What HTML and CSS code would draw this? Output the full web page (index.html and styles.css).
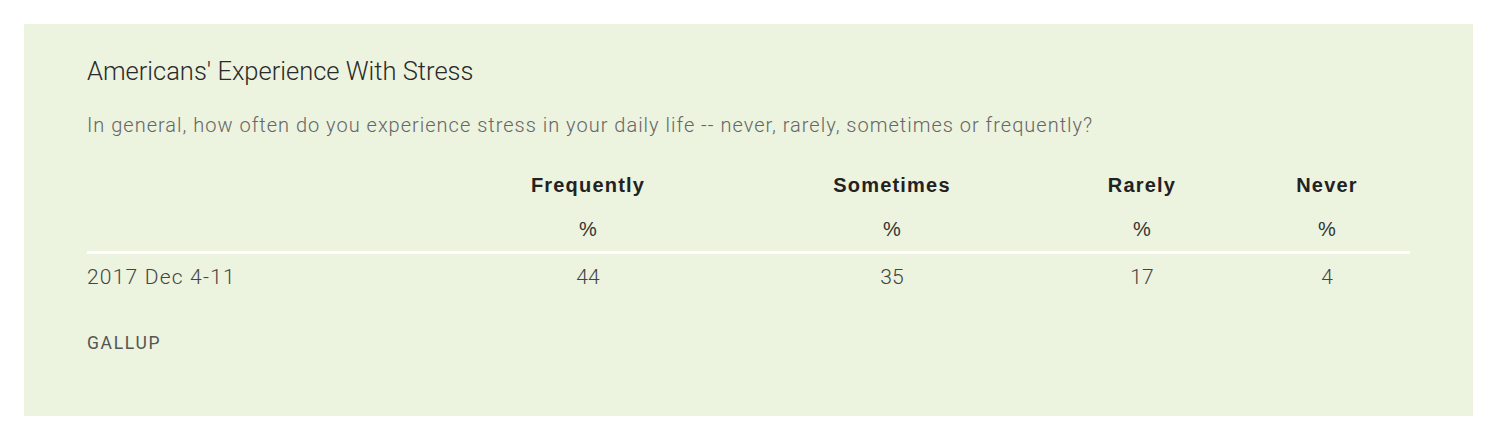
FILE: index.html
```html
<!DOCTYPE html>
<html>
<head>
<meta charset="utf-8">
<link rel="stylesheet" href="styles.css">
</head>
<body>
<div class="card">
  <h2 class="title">Americans' Experience With Stress</h2>
  <p class="question">In general, how often do you experience stress in your daily life -- never, rarely, sometimes or frequently?</p>
  <div class="table">
    <div class="row head">
      <div class="cell label"></div>
      <div class="cell">Frequently</div>
      <div class="cell">Sometimes</div>
      <div class="cell">Rarely</div>
      <div class="cell">Never</div>
    </div>
    <div class="row units">
      <div class="cell label"></div>
      <div class="cell">%</div>
      <div class="cell">%</div>
      <div class="cell">%</div>
      <div class="cell">%</div>
    </div>
    <div class="row data">
      <div class="cell label">2017 Dec 4-11</div>
      <div class="cell">44</div>
      <div class="cell">35</div>
      <div class="cell">17</div>
      <div class="cell">4</div>
    </div>
  </div>
  <div class="source">GALLUP</div>
</div>
</body>
</html>
```
FILE: styles.css
```css
html, body {
  margin: 0;
  padding: 0;
  background: #ffffff;
}
body {
  padding: 24px 27px 28px 24px;
  font-family: Roboto, "Liberation Sans", Arial, sans-serif;
}
.card {
  background: #ecf3de;
  height: 392px;
  box-sizing: border-box;
  padding: 32px 63px 0 63px;
}
.title {
  margin: 0;
  font-weight: 300;
  font-size: 25.5px;
  line-height: 30px;
  color: #2a2a2a;
}
.question {
  margin: 27px 0 0 0;
  font-weight: 300;
  font-size: 20px;
  line-height: 24px;
  letter-spacing: 1px;
  color: #666666;
}
.table {
  margin-top: 36px;
  width: 1323px;
}
.row {
  display: grid;
  grid-template-columns: 345px 312px 296px 204px 166px;
}
.cell {
  text-align: center;
}
.cell.label {
  text-align: left;
}
.head {
  font-family: "Liberation Sans", Arial, sans-serif;
  font-weight: 700;
  font-size: 20px;
  line-height: 24px;
  letter-spacing: 1.2px;
  color: #222222;
}
.units {
  margin-top: 20px;
  font-family: "Liberation Sans", Arial, sans-serif;
  font-size: 20px;
  line-height: 24px;
  color: #333333;
  padding-bottom: 10px;
  border-bottom: 3px solid #ffffff;
}
.data {
  margin-top: 11px;
  font-size: 21px;
  line-height: 24px;
  color: #444444;
  font-weight: 300;
}
.data .label {
  letter-spacing: 1.2px;
}
.source {
  margin-top: 44px;
  font-size: 17.5px;
  line-height: 20px;
  letter-spacing: 1.7px;
  color: #555555;
}
```
